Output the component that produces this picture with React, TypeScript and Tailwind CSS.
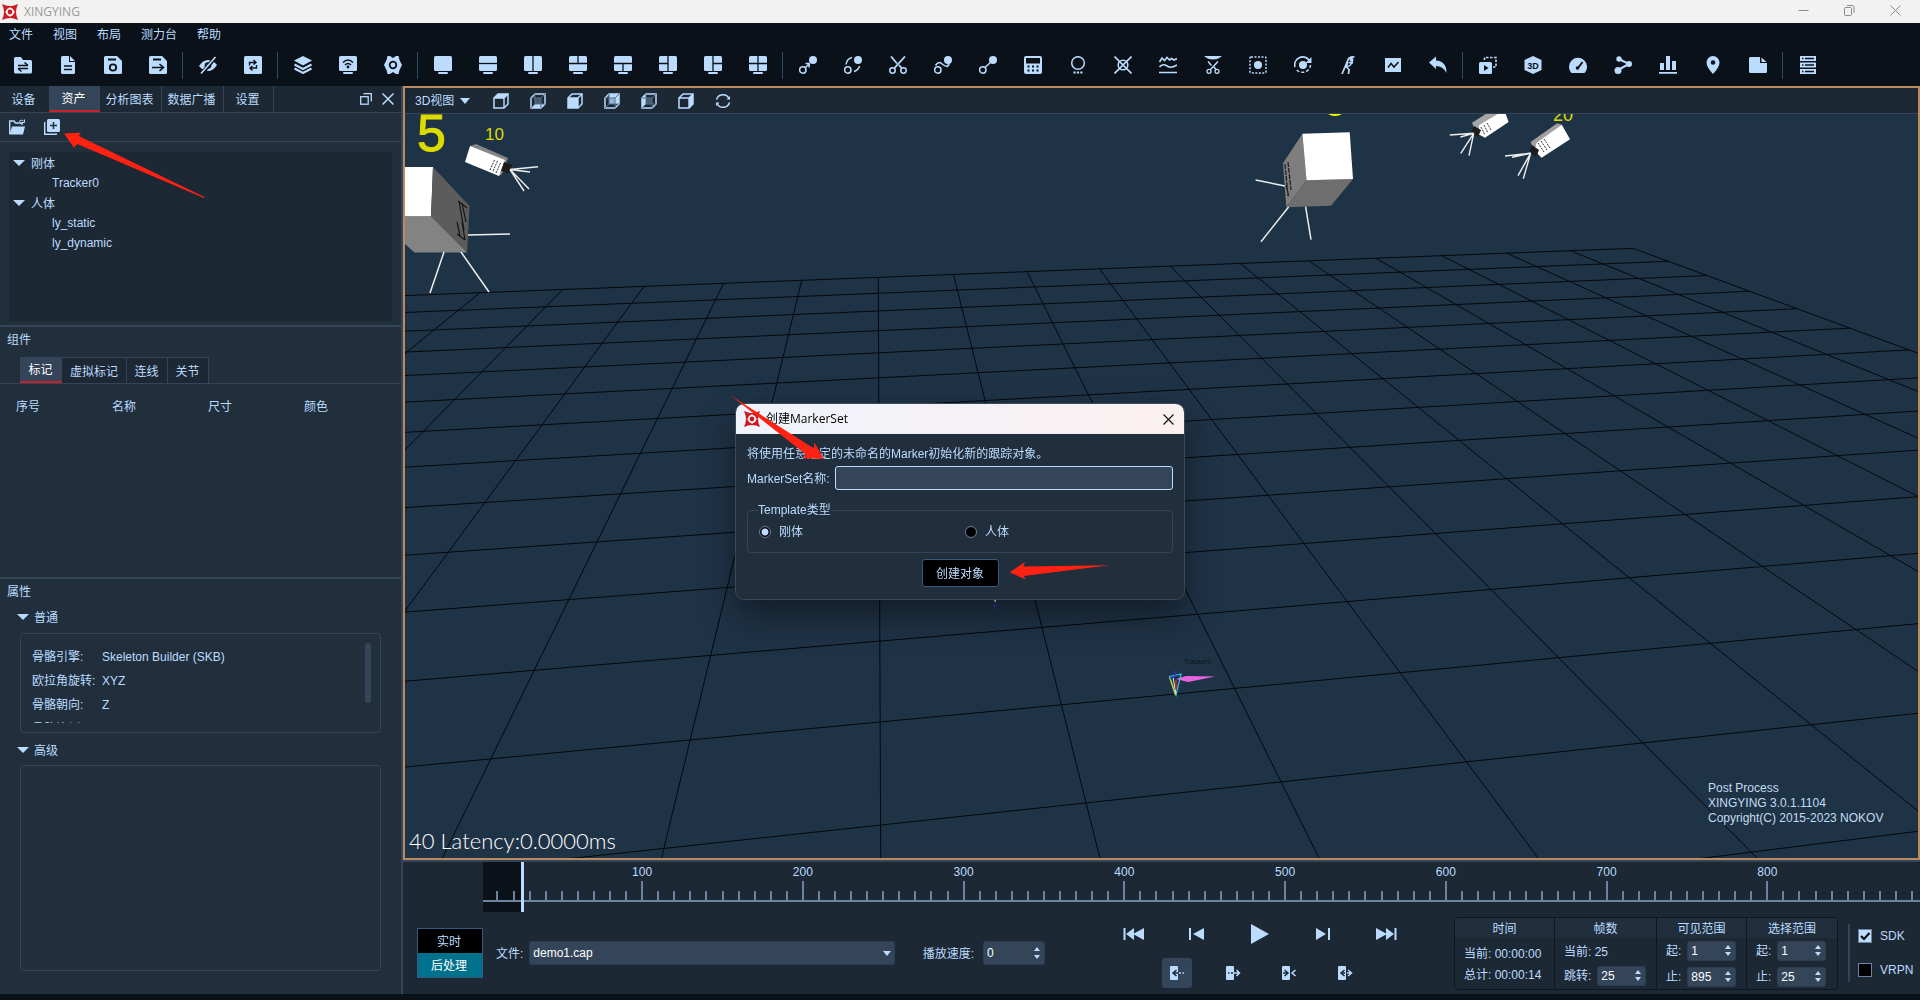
import { useState } from "react";
import type { ReactNode } from "react";

const DARK = "#0a1118";

function Ico({ children, size = 18 }: { children: ReactNode; size?: number }) {
  return (
    <svg width={size} height={size} viewBox={`0 0 ${size} ${size}`} fill="currentColor" stroke="none" aria-hidden="true">
      {children}
    </svg>
  );
}

function Logo() {
  return (
    <svg width="16" height="16" viewBox="0 0 16 16" aria-hidden="true">
      <path d="M0 0 L4 1.5 Q8 2.5 12 1.5 L16 0 L14.5 4 Q13.5 8 14.5 12 L16 16 L12 14.5 Q8 13.5 4 14.5 L0 16 L1.5 12 Q2.5 8 1.5 4 Z" fill="#cf1820" />
      <circle cx="8" cy="8" r="3.2" fill="none" stroke="#fff" strokeWidth="1.6" />
      <path d="M8 3v2M8 11v2M3 8h2M11 8h2" stroke="#fff" strokeWidth="1" />
    </svg>
  );
}

// monitor icon, "lines" are the pane dividers
function Screen({ lines = "" }: { lines?: string }) {
  return (
    <Ico>
      <rect x="0" y="0" width="18" height="15" rx="1.5" />
      <rect x="4" y="16" width="10" height="2" rx="1" />
      <path d={lines} stroke={DARK} strokeWidth="1.3" />
    </Ico>
  );
}

const toolGroups: { label: string; icon: ReactNode }[][] = [
  [
    {
      label: "打开",
      icon: (
        <Ico>
          <path d="M0 2.5Q0 1 1.5 1H7l2 3h7.500Q18 4 18 5.500V16Q18 17.500 16.500 17.500H1.500Q0 17.500 0 16Z" />
          <path d="M4 9.500h10M10.500 6.500l3.500 3M14 12.500H4M7.500 15.500L4 12.500" fill="none" stroke={DARK} strokeWidth="1.5" />
        </Ico>
      ),
    },
    {
      label: "新建",
      icon: (
        <Ico>
          <path d="M2 1.500Q2 0 3.500 0H10v6h6v10.500Q16 18 14.500 18H3.500Q2 18 2 16.500Z" />
          <path d="M11 0L16 5H11Z" />
          <path d="M5 10h8M5 13.500h8" stroke={DARK} strokeWidth="1.500" />
        </Ico>
      ),
    },
    {
      label: "保存",
      icon: (
        <Ico>
          <path d="M0 1.500Q0 0 1.500 0H13l5 5v11.500Q18 18 16.500 18h-15Q0 18 0 16.500Z" />
          <path d="M4 3.500h8" stroke={DARK} strokeWidth="2" />
          <circle cx="9" cy="11.500" r="3.200" fill="none" stroke={DARK} strokeWidth="1.800" />
        </Ico>
      ),
    },
    {
      label: "另存为",
      icon: (
        <Ico>
          <path d="M0 1.500Q0 0 1.500 0H13l5 5v11.500Q18 18 16.500 18h-15Q0 18 0 16.500Z" />
          <path d="M4 3.500h8" stroke={DARK} strokeWidth="2" />
          <path d="M3 11.500h11M10.500 8l4 3.500l-4 3.500" fill="none" stroke={DARK} strokeWidth="1.600" />
        </Ico>
      ),
    },
  ],
  [
    {
      label: "隐藏",
      icon: (
        <Ico>
          <path d="M0 10Q4 4 9 4q5 0 9 5q-4 6-9 6t-9-5Z" />
          <circle cx="9" cy="9.500" r="3.300" fill={DARK} />
          <circle cx="9" cy="9.500" r="1.800" />
          <path d="M16.500 1L2.500 18" stroke={DARK} strokeWidth="4" />
          <path d="M16.500 1L2 17.500" stroke="currentColor" strokeWidth="1.600" />
        </Ico>
      ),
    },
    {
      label: "刷新",
      icon: (
        <Ico>
          <rect x="0" y="0" width="18" height="18" rx="1.500" />
          <path d="M5.500 9.500V6.500H12M9.500 4L12 6.500L9.500 8.500M12.500 9V12H6M8.500 14.500L6 12L8.500 10" fill="none" stroke={DARK} strokeWidth="1.400" />
        </Ico>
      ),
    },
  ],
  [
    {
      label: "图层",
      icon: (
        <Ico>
          <path d="M9 0l9 4.500L9 9.500L0 4.500Z" />
          <path d="M0.500 8.500L9 13l8.500-4.500M0.500 12.500L9 17l8.500-4.500" fill="none" stroke="currentColor" strokeWidth="2" />
        </Ico>
      ),
    },
    {
      label: "网络",
      icon: (
        <Ico>
          <rect x="0" y="0" width="18" height="15" rx="1.500" />
          <rect x="4" y="16" width="10" height="2" rx="1" />
          <path d="M4 6.500Q9 1.500 14 6.500M6 9q3-3 6 0" fill="none" stroke={DARK} strokeWidth="1.600" />
          <circle cx="9" cy="11" r="1.400" fill={DARK} />
        </Ico>
      ),
    },
    {
      label: "系统设置",
      icon: (
        <Ico>
          <path d="M3.500 0h2.500l3 2l3-2h2.500l1 4L18 9l-2.500 5l-1 4H12l-3-2l-3 2H3.500l-1-4L0 9l2.500-5Z" />
          <circle cx="9" cy="9" r="3.300" fill="none" stroke={DARK} strokeWidth="1.800" />
        </Ico>
      ),
    },
  ],
  [
    { label: "单视图", icon: <Screen /> },
    { label: "上下视图", icon: <Screen lines="M0 7.500H18" /> },
    { label: "左右视图", icon: <Screen lines="M9 0V15" /> },
    { label: "三视图上", icon: <Screen lines="M0 7.500H18M9 0V7.500" /> },
    { label: "三视图下", icon: <Screen lines="M0 7.500H18M9 7.500V15" /> },
    { label: "三视图左", icon: <Screen lines="M9 0V15M0 7.500H9" /> },
    { label: "三视图右", icon: <Screen lines="M9 0V15M9 7.500H18" /> },
    { label: "四视图", icon: <Screen lines="M9 0V15M0 7.500H18" /> },
  ],
  [
    {
      label: "识别",
      icon: (
        <Ico>
          <circle cx="14" cy="4" r="4" />
          <circle cx="3.800" cy="14" r="3.200" fill="none" stroke="currentColor" strokeWidth="1.500" />
          <path d="M6.500 11.500L10 8M6.500 7.500H10.200V11.500" fill="none" stroke="currentColor" strokeWidth="1.400" />
        </Ico>
      ),
    },
    {
      label: "交换",
      icon: (
        <Ico>
          <circle cx="14" cy="4" r="4" />
          <circle cx="3.800" cy="14" r="3.200" fill="none" stroke="currentColor" strokeWidth="1.500" />
          <path d="M2 8.500Q3 2.500 8 1.500M10 15.500Q14.500 14 15.500 10" fill="none" stroke="currentColor" strokeWidth="1.500" />
        </Ico>
      ),
    },
    {
      label: "剪切",
      icon: (
        <Ico>
          <path d="M2 0.500L8 7.500M16 0.500L5.500 12M10 9L12.500 12" stroke="currentColor" strokeWidth="1.800" />
          <circle cx="3.500" cy="14.500" r="2.700" fill="none" stroke="currentColor" strokeWidth="1.500" />
          <circle cx="14.500" cy="14.500" r="2.700" fill="none" stroke="currentColor" strokeWidth="1.500" />
        </Ico>
      ),
    },
    {
      label: "插值",
      icon: (
        <Ico>
          <circle cx="14" cy="4" r="4" />
          <circle cx="3.800" cy="14" r="3.200" fill="none" stroke="currentColor" strokeWidth="1.500" />
          <path d="M1.500 9.500Q4.500 5 7.500 7.500T13 10.500Q15.500 9 15 6" fill="none" stroke="currentColor" strokeWidth="1.500" />
        </Ico>
      ),
    },
    {
      label: "连接",
      icon: (
        <Ico>
          <circle cx="14" cy="4" r="4" />
          <circle cx="3.800" cy="14" r="3.200" fill="none" stroke="currentColor" strokeWidth="1.500" />
          <path d="M6 11.500L13 5" stroke="currentColor" strokeWidth="1.500" />
        </Ico>
      ),
    },
    {
      label: "计算",
      icon: (
        <Ico>
          <rect x="0" y="0" width="18" height="18" rx="2" />
          <path d="M2 2h14v5.500H2ZM3.500 9.500h2v2h-2ZM8 9.500h2v2H8ZM12.500 9.500h2v2h-2ZM3.500 13.500h2v2h-2ZM8 13.500h2v2H8ZM12.500 13.500h2v2h-2Z" fill={DARK} />
        </Ico>
      ),
    },
    {
      label: "骨骼",
      icon: (
        <Ico>
          <circle cx="9" cy="7" r="6.300" fill="none" stroke="currentColor" strokeWidth="1.500" />
          <path d="M4.500 16.500h2.200M7.900 16.500h2.200M11.300 16.500h2.200" stroke="currentColor" strokeWidth="2" />
        </Ico>
      ),
    },
    {
      label: "删除",
      icon: (
        <Ico>
          <path d="M0.500 0.500L17.500 17.500M17.500 0.500L0.500 17.500" stroke="currentColor" strokeWidth="1.600" />
          <circle cx="9" cy="9" r="4.800" fill="none" stroke="currentColor" strokeWidth="1.600" />
        </Ico>
      ),
    },
    {
      label: "平滑",
      icon: (
        <Ico>
          <path d="M0.500 6L3 2L5.500 4.500L8 1.500L10.500 4L12.500 2.500L15 4L18 2.500M0.500 11Q4 7 8 10t10-1M0 16.500H18" fill="none" stroke="currentColor" strokeWidth="1.600" />
        </Ico>
      ),
    },
    {
      label: "裁剪",
      icon: (
        <Ico>
          <path d="M0 0h18Q14 3.500 9 3.500T0 0Z" />
          <path d="M4 5.500l3.500 4M14 5.500l-7.500 8M10 11l2 2.500" stroke="currentColor" strokeWidth="1.500" />
          <circle cx="5" cy="15.300" r="2" fill="none" stroke="currentColor" strokeWidth="1.300" />
          <circle cx="13" cy="15.300" r="2" fill="none" stroke="currentColor" strokeWidth="1.300" />
        </Ico>
      ),
    },
    {
      label: "框选",
      icon: (
        <Ico>
          <rect x="1" y="1" width="16" height="16" rx="1" fill="none" stroke="currentColor" strokeWidth="1.500" strokeDasharray="2 1.500" />
          <circle cx="9" cy="9" r="4" />
        </Ico>
      ),
    },
    {
      label: "旋转",
      icon: (
        <Ico>
          <path d="M1 11A8 8 0 0 1 15 4" fill="none" stroke="currentColor" strokeWidth="1.700" />
          <path d="M17.500 1V7H11.500Z" />
          <path d="M16.500 9A8 8 0 0 1 2 13" fill="none" stroke="currentColor" strokeWidth="1.500" strokeDasharray="3 2" />
          <circle cx="9" cy="9" r="4" />
        </Ico>
      ),
    },
    {
      label: "人体",
      icon: (
        <Ico>
          <path d="M15.500 1Q9.500 0.500 8.500 5L6 11L3 18M8.500 6L7.500 11L10 13.500L9.500 18" fill="none" stroke="currentColor" strokeWidth="1.700" />
          <path d="M9.500 6.500L14 7M13.500 5L11.500 9L8 11" fill="none" stroke="currentColor" strokeWidth="1.400" />
          <circle cx="12.500" cy="3.800" r="2" />
        </Ico>
      ),
    },
    {
      label: "曲线",
      icon: (
        <Ico>
          <rect x="1" y="2" width="16" height="14" />
          <path d="M4 11.500l3-4l3 3.500l4.500-5" fill="none" stroke={DARK} strokeWidth="1.500" />
        </Ico>
      ),
    },
    {
      label: "撤销",
      icon: (
        <Ico>
          <path d="M0 6.500L7 0.500V4.500Q17.500 5 17.500 17Q14 10 7 10v3Z" />
        </Ico>
      ),
    },
  ],
  [
    {
      label: "录制",
      icon: (
        <Ico>
          <path d="M5.500 4V1.500h11.500V11H14" fill="none" stroke="currentColor" strokeWidth="1.600" strokeDasharray="2.500 1.500" />
          <rect x="0" y="6" width="13" height="12" rx="1.500" />
          <path d="M5 9l4.500 3L5 15Z" fill={DARK} />
        </Ico>
      ),
    },
    {
      label: "三维",
      icon: (
        <Ico>
          <path d="M9 0l8.500 4v10L9 18L0.500 14V4Z" />
          <text x="9" y="12.500" textAnchor="middle" fontSize="9" fontWeight="700" fill={DARK}>3D</text>
        </Ico>
      ),
    },
    {
      label: "仪表",
      icon: (
        <Ico>
          <path d="M2 16.500A9 9 0 1 1 16 16.500Q15.500 17 14.500 17h-11Q2.500 17 2 16.500Z" />
          <path d="M9 12L13.500 6" stroke={DARK} strokeWidth="2" />
          <circle cx="8.500" cy="12" r="1.800" fill={DARK} />
        </Ico>
      ),
    },
    {
      label: "分享",
      icon: (
        <Ico>
          <circle cx="5" cy="3" r="2.700" />
          <circle cx="15" cy="8" r="3" />
          <circle cx="4" cy="14.500" r="3.500" />
          <path d="M5 3L15 8L4 14" fill="none" stroke="currentColor" strokeWidth="2" />
        </Ico>
      ),
    },
    {
      label: "统计",
      icon: (
        <Ico>
          <path d="M1 7h4v7H1ZM7 0h4v14H7ZM13 5h4v9h-4ZM0 16h18v1.800H0Z" />
        </Ico>
      ),
    },
    {
      label: "定位",
      icon: (
        <Ico>
          <path d="M9 0a6.500 6.500 0 0 1 6.500 6.500Q15.500 11 9 18Q2.500 11 2.500 6.500A6.500 6.500 0 0 1 9 0Z" />
          <circle cx="9" cy="6.500" r="2.300" fill={DARK} />
        </Ico>
      ),
    },
    {
      label: "便签",
      icon: (
        <Ico>
          <path d="M0 2.500Q0 1 1.500 1H11v6h7v8.500Q18 17 16.500 17h-15Q0 17 0 15.500Z" />
          <path d="M12.500 1.500L17.500 6h-5Z" />
        </Ico>
      ),
    },
  ],
  [
    {
      label: "列表",
      icon: (
        <Ico>
          <path d="M1 0h16v5H1ZM1 6.500h16v5H1ZM1 13h16v5H1Z" />
          <path d="M6 2.500h9M6 9h9M6 15.500h9" stroke={DARK} strokeWidth="1.500" />
          <path d="M3 2.500h1.500M3 9h1.500M3 15.500h1.500" stroke={DARK} strokeWidth="1.500" />
        </Ico>
      ),
    },
  ],
];

const cubeFaces = [
  { label: "顶视图", face: "M1 5L5 1H15L11 5Z" },
  { label: "底视图", face: "M1 15L5 11H15L11 15Z" },
  { label: "前视图", face: "M1 5H11V15H1Z" },
  { label: "后视图", face: "M5 1H15V11H5Z" },
  { label: "左视图", face: "M1 5L5 1V11L1 15Z" },
  { label: "右视图", face: "M11 5L15 1V11L11 15Z" },
];

function Cube({ face, back }: { face: string; back: boolean }) {
  return (
    <Ico size={16}>
      <path d={face} />
      {back && <path d="M5 5H11V11H5Z" fill="#6f8cab" opacity="0.5" />}
      <path d="M1 5L5 1H15V11L11 15H1Z" fill="none" stroke="currentColor" strokeWidth="1.5" />
      {back ? (
        <path d="M5 1V11M5 11H15M5 11L1 15M1 5H11V15M11 5L15 1" fill="none" stroke="#56708c" strokeWidth="1" />
      ) : (
        <path d="M1 5H11V15M11 5L15 1" fill="none" stroke="currentColor" strokeWidth="1.4" />
      )}
    </Ico>
  );
}

function Caret() {
  return (
    <svg width="12" height="6" viewBox="0 0 12 6" fill="currentColor" aria-hidden="true">
      <path d="M0 0H12L6 6Z" />
    </svg>
  );
}

// ground plane: (u, v) grid index to screen
function project(u: number, v: number) {
  const d = 1 - 0.008676 * u - 0.04457 * v;
  const x = (1633 - 76.23 * u - 39.088 * v) / d;
  const y = (248.3 + 0.2355 * u + 1.337 * v) / d;
  return [x, y];
}

function gridPath() {
  let d = "";
  for (let u = 0; u <= 17; u++) {
    const [x1, y1] = project(u, 0);
    const [x2, y2] = project(u, 15);
    d += `M${x1} ${y1}L${x2} ${y2}`;
  }
  for (let v = 0; v <= 14; v++) {
    const [x1, y1] = project(0, v);
    const [x2, y2] = project(17, v);
    d += `M${x1} ${y1}L${x2} ${y2}`;
  }
  return d;
}

function Scene() {
  return (
    <svg className="absolute inset-0 h-full w-full" viewBox="405 114 1513 744" preserveAspectRatio="xMinYMin slice" aria-hidden="true">
      <path d={gridPath()} fill="none" stroke="#04080c" strokeWidth="1" />

      {/* camera 5 */}
      <text x="417" y="151" fontSize="52" fill="#dcdc00" stroke="#dcdc00" fontFamily="Liberation Sans">5</text>
      <path d="M405 167H433L431 216.500H405Z" fill="#fff" />
      <path d="M433 167L469.500 206L467 252.500L431 217Z" fill="#5c5c5c" />
      <path d="M405 216.500H431L467 252.500H414.500L405 244Z" fill="#838383" />
      <path d="M458 201L467 208M459 201L464 230M462 203L466 222M457 222L460 236M462 222L465 240M457 234L465 240" fill="none" stroke="#151515" strokeWidth="1.200" />
      <path d="M468 235L510 234M444 252L430 293M461 252L489 292" stroke="#eee" strokeWidth="1.500" />

      {/* camera 10 */}
      <text x="485" y="140" fontSize="17" fill="#dcdc00" fontFamily="Liberation Sans">10</text>
      <path d="M470 146L476 144L508 158L502 174L499 176Z" fill="#858585" />
      <path d="M470 146L505 160L499 176L465 162Z" fill="#fff" />
      <path d="M490 170l5-11M493 171l5-11M496 173l5-11" stroke="#333" strokeDasharray="2 1" />
      <path d="M504 162L512 165L509 173L501 171Z" fill="#1c1c1c" />
      <path d="M510 169.500L538 166.700M510 169.500L530 172M510 169.500L529 189M510 169.500L524 191" stroke="#eee" strokeWidth="1.400" />

      {/* far camera on the right */}
      <ellipse cx="1335" cy="113" rx="7" ry="3" fill="#f5f500" />
      <path d="M1302.400 133.700L1306.500 180.300L1286.300 207.300L1283 163.300Z" fill="#7e7e7e" />
      <path d="M1306.500 180.300L1353 179L1331 205.700L1286.300 207.300Z" fill="#6e6e6e" />
      <path d="M1302.400 133.700L1349.700 132.300L1353 179L1306.500 180.300Z" fill="#fff" />
      <path d="M1285 164L1288 196M1288 162L1291 190M1286 185L1289 197" stroke="#1c1c1c" strokeWidth="1.200" strokeDasharray="5 1" />
      <path d="M1285 186L1255.600 180M1288.600 207L1261 241.700M1305.600 206.700L1311 239.700" stroke="#eee" strokeWidth="1.500" />

      <path d="M1472 122.700L1489 112H1502L1479 127L1476 132Z" fill="#a5a5a5" />
      <path d="M1479 125.300L1501 112H1505L1508.600 122L1485 137.700L1478 134Z" fill="#fff" />
      <path d="M1481 127l4 8M1484 125l4 8M1487 123l4 7" stroke="#333" strokeDasharray="2 1" />
      <path d="M1474 126L1481 130L1478 137L1471 133Z" fill="#1c1c1c" />
      <path d="M1473.700 133.300L1449.800 135M1473.700 133.300L1460.400 137M1473.700 133.300L1460.800 153.300M1473.700 133.300L1469 155.700" stroke="#eee" strokeWidth="1.400" />

      {/* camera 20 */}
      <text x="1553" y="121" fontSize="18" fill="#dcdc00" fontFamily="Liberation Sans">20</text>
      <path d="M1530.600 142L1557.200 123.300L1562 124.700L1537 144L1533 148Z" fill="#a39f9f" />
      <path d="M1536.600 142.700L1561.800 124.700L1570 139.300L1541.600 157.700L1534 150Z" fill="#fff" />
      <path d="M1538 143l6 9M1541 141l6 9M1544 139l6 9" stroke="#333" strokeDasharray="2 1" />
      <path d="M1532 145L1539 150L1536 157L1529 152Z" fill="#1c1c1c" />
      <path d="M1530.600 153.300L1505 156M1530.600 153.300L1512 157.300M1530.600 153.300L1518 175.700M1530.600 153.300L1523.300 178.700" stroke="#eee" strokeWidth="1.400" />

      {/* tracked objects */}
      <path d="M995 596V602" stroke="#dfe6cf" strokeWidth="2" />
      <path d="M990 605.500H999M994.500 601V609M1067 597V600" stroke="#34349c" strokeWidth="1.200" />
      <text x="1184" y="664" fontSize="7" fill="#0b141c" fontFamily="Liberation Sans">Tracker0</text>
      <path d="M1176 679L1186 676L1215 676.500L1188 682Z" fill="#ea63e0" />
      <path d="M1169.500 676.500L1181 674L1176 695Z" fill="none" stroke="#35c3e8" strokeWidth="1.200" />
      <path d="M1169.500 677L1175.500 695" stroke="#b7cf3a" strokeWidth="1.300" />
      <path d="M1173 677L1176 694" stroke="#e6e6e6" />
      <path d="M1176 680V689" stroke="#e02020" strokeWidth="1.500" />
      <path d="M1175 671V677L1170 678" fill="none" stroke="#2c34d8" strokeWidth="1.300" />
    </svg>
  );
}

function Spin({ label, value, cls }: { label: string; value: number; cls: string }) {
  const [n, setN] = useState(value);
  return (
    <div className={`flex items-center rounded-[3px] border border-[#2c3d4f] bg-[#34455a] pl-[3px] pr-1 ${cls}`}>
      <input
        type="number"
        aria-label={label}
        value={n}
        onChange={(e) => setN(Number(e.target.value))}
        className="w-0 min-w-0 flex-1 appearance-none bg-transparent text-[12px] leading-4 text-white outline-none [appearance:textfield] [&::-webkit-inner-spin-button]:appearance-none"
      />
      <div className="flex h-full flex-col justify-evenly">
        <button aria-label={label + "加"} onClick={() => setN(n + 1)}>
          <svg width="6" height="4" viewBox="0 0 6 4" className="block" fill="currentColor"><path d="M3 0L6 4H0Z" /></svg>
        </button>
        <button aria-label={label + "减"} onClick={() => setN(n - 1)}>
          <svg width="6" height="4" viewBox="0 0 6 4" className="block" fill="currentColor"><path d="M0 0H6L3 4Z" /></svg>
        </button>
      </div>
    </div>
  );
}

function TitleBar() {
  return (
    <header className="flex h-[23px] items-center bg-[#f2f2f2] pl-[2px] text-[#999]">
      <Logo />
      <h1 className="ml-[6px] flex-1 font-['Open_Sans'] text-[12px]">XINGYING</h1>
      <div className="flex h-full items-center gap-[35px] pb-[3px] pr-[19px]">
        <button aria-label="最小化">
          <svg width="11" height="11" viewBox="0 0 11 11" fill="none" stroke="#8a8a8a"><path d="M0.500 5.500H10.500" /></svg>
        </button>
        <button aria-label="还原">
          <svg width="11" height="11" viewBox="0 0 11 11" fill="none" stroke="#8a8a8a">
            <rect x="0.500" y="2.500" width="7" height="8" rx="1" />
            <path d="M3 0.500H8.500Q10 0.500 10 2V8" />
          </svg>
        </button>
        <button aria-label="关闭">
          <svg width="11" height="11" viewBox="0 0 11 11" fill="none" stroke="#8a8a8a"><path d="M0.500 0.500L10.500 10.500M10.500 0.500L0.500 10.500" /></svg>
        </button>
      </div>
    </header>
  );
}

function Toolbar() {
  return (
    <div className="flex h-[42px] items-center">
      {toolGroups.map((group, i) => (
        <div key={i} className="flex items-center">
          {i > 0 && (
            <div className="flex w-[5px] justify-center">
              <div className="h-[27px] w-px bg-[#2d4a66]" />
            </div>
          )}
          {group.map((t) => (
            <button key={t.label} aria-label={t.label} className="flex h-8 w-[45px] items-center justify-center">
              {t.icon}
            </button>
          ))}
        </div>
      ))}
    </div>
  );
}

function LeftPanel() {
  return (
    <aside className="flex w-[403px] shrink-0 flex-col border-r-2 border-[#34455a] bg-[#212f3d]">
      <div className="flex h-[27px] items-stretch border-b border-[#34455a] bg-[#1c2834]">
        <button className="w-[49px] pr-[2px] pt-[2px]">设备</button>
        <button className="w-[51px] border-b-2 border-[#c8232b] bg-[#34455a] pr-[2px] pt-[2px] text-white">资产</button>
        <button className="w-[62px] border-r border-[#34455a] pr-[2px] pt-[2px]">分析图表</button>
        <button className="w-[62px] border-r border-[#34455a] pr-[2px] pt-[2px]">数据广播</button>
        <button className="w-[50px] border-r border-[#34455a] pr-[2px] pt-[2px]">设置</button>
        <div className="flex flex-1 items-center justify-end gap-[10px] pr-[7px]">
          <button aria-label="浮动">
            <svg width="12" height="12" viewBox="0 0 12 12" fill="none" stroke="currentColor" strokeWidth="1.300">
              <rect x="0.700" y="3.700" width="7.500" height="7.500" />
              <path d="M3.500 0.700H11.300V8.500" />
            </svg>
          </button>
          <button aria-label="关闭面板">
            <svg width="12" height="12" viewBox="0 0 12 12" fill="none" stroke="currentColor" strokeWidth="1.500"><path d="M0.500 0.500L11.500 11.500M11.500 0.500L0.500 11.500" /></svg>
          </button>
        </div>
      </div>

      <div className="flex h-[29px] items-center gap-[19px] border-b border-[#34455a] pl-[9px]">
        <button aria-label="打开资产">
          <Ico size={16}>
            <path d="M0.700 15V2H5l1.500 2H13v2" fill="none" stroke="currentColor" strokeWidth="1.400" />
            <path d="M3 7.500H16L14 15.500H0.500Z" />
            <path d="M10 2.500Q12.500 0 14.500 2M15.500 0.500V3.500H12.500" fill="none" stroke="currentColor" />
          </Ico>
        </button>
        <button aria-label="新建资产">
          <Ico size={16}>
            <rect x="3" y="0" width="13" height="13" rx="1.500" />
            <path d="M9.500 3V10M6 6.500H13" stroke="#212f3d" strokeWidth="1.500" />
            <path d="M0.700 3V15.300H13" fill="none" stroke="currentColor" strokeWidth="1.400" />
          </Ico>
        </button>
      </div>

      <ul className="mx-[9px] mt-[10px] h-[169px] bg-[#1c2834] pt-[1px] leading-5">
        <li className="flex h-5 items-center gap-[6px] pl-1"><Caret /><span className="pt-[2px]">刚体</span></li>
        <li className="pl-[43px]">Tracker0</li>
        <li className="flex h-5 items-center gap-[6px] pl-1"><Caret /><span className="pt-[2px]">人体</span></li>
        <li className="pl-[43px]">ly_static</li>
        <li className="pl-[43px]">ly_dynamic</li>
      </ul>

      <section className="mt-1 h-[252px] border-t-2 border-[#34455a]">
        <h2 className="h-[30px] pl-[7px] pt-[5px] leading-4">组件</h2>
        <div className="flex h-[27px] border-b border-[#34455a] pl-5">
          <button className="w-[42px] border-b-2 border-[#c8232b] bg-[#34455a] pr-[1px] pt-[2px] text-white">标记</button>
          <button className="w-[65px] border-r border-t border-[#34455a] bg-[#1c2834] pt-[2px]">虚拟标记</button>
          <button className="w-[41px] border-r border-t border-[#34455a] bg-[#1c2834] pr-[1px] pt-[2px]">连线</button>
          <button className="w-[41px] border-r border-t border-[#34455a] bg-[#1c2834] pr-[1px] pt-[2px]">关节</button>
        </div>
        <table className="mt-3 text-left leading-5">
          <thead>
            <tr>
              <th className="w-24 pl-4 pt-[1px] font-normal">序号</th>
              <th className="w-24 pl-4 pt-[1px] font-normal">名称</th>
              <th className="w-24 pl-4 pt-[1px] font-normal">尺寸</th>
              <th className="w-24 pl-4 pt-[1px] font-normal">颜色</th>
            </tr>
          </thead>
        </table>
      </section>

      <section className="flex flex-1 flex-col border-t-2 border-[#34455a]">
        <h2 className="pl-[7px] pt-[5px] leading-4">属性</h2>
        <button className="mt-[7px] flex h-5 items-center gap-[5px] pl-[17px]"><Caret /><span className="pt-[2px]">普通</span></button>
        <div className="ml-5 mr-5 mt-[6px] flex h-[100px] justify-between rounded-[4px] border border-[#34455a] py-[9px] pl-[11px] pr-[9px]">
          <dl className="grid auto-rows-[24px] grid-cols-[70px_auto] overflow-hidden pt-[2px] leading-6">
            <dt>骨骼引擎:</dt>
            <dd>Skeleton Builder (SKB)</dd>
            <dt className="whitespace-nowrap">欧拉角旋转:</dt>
            <dd>XYZ</dd>
            <dt>骨骼朝向:</dt>
            <dd>Z</dd>
            <dt>骨骼比例:</dt>
            <dd />
          </dl>
          <div className="h-[60px] w-[6px] rounded-full bg-[#34455a]" />
        </div>
        <button className="mt-[7px] flex h-5 items-center gap-[5px] pl-[17px]"><Caret /><span className="pt-[2px]">高级</span></button>
        <div className="mx-5 mb-[23px] mt-[5px] flex-1 rounded-[4px] border border-[#34455a]" />
      </section>
    </aside>
  );
}

function Viewport() {
  return (
    <section className="flex flex-1 flex-col border-2 border-[#b98b5e]">
      <div className="flex h-[26px] shrink-0 items-center border-b border-[#34455a] bg-[#1c2834] pl-[10px]">
        <button className="flex w-[78px] items-center gap-[6px] pt-[1px]">
          3D视图
          <svg width="10" height="6" viewBox="0 0 10 6" fill="currentColor"><path d="M0 0H10L5 6Z" /></svg>
        </button>
        <div className="flex gap-[21px]">
          {cubeFaces.map((c, i) => (
            <button key={c.label} aria-label={c.label}><Cube face={c.face} back={i === 1 || i === 3 || i === 4} /></button>
          ))}
          <button aria-label="重置视图">
            <Ico size={16}>
              <path d="M1.500 6.500A6.700 6.700 0 0 1 14 5.500M14.500 9.500A6.700 6.700 0 0 1 2 10.500" fill="none" stroke="currentColor" strokeWidth="1.500" />
              <path d="M15 3V6.500H11.500ZM1 13V9.500H4.500Z" />
            </Ico>
          </button>
        </div>
      </div>
      <div className="relative flex-1 overflow-hidden bg-[#1f3347]">
        <Scene />
        <p className="absolute bottom-[3px] left-1 font-['Lato'] text-[22px] font-light leading-7 text-white">40 Latency:0.0000ms</p>
        <p className="absolute bottom-8 right-[33px] w-[177px] whitespace-nowrap leading-[15px] text-[#c3dcf2]">
          Post Process<br />XINGYING 3.0.1.1104<br />Copyright(C) 2015-2023 NOKOV
        </p>
      </div>
    </section>
  );
}

const ticks = Array.from({ length: 89 }, (_, i) => (i + 1) * 10);

function Timeline() {
  return (
    <div className="relative ml-20 h-[50px] overflow-hidden">
      <div className="absolute inset-y-0 left-0 w-[39px] bg-[#0a1118]" />
      <div className="absolute left-0 right-0 top-[38px] h-[2px] bg-[#6b839f]" />
      {ticks.map((f) => (
        <div key={f} className="absolute bottom-[11px]" style={{ left: `${((f - 1) / 894) * 100}%` }}>
          {f % 100 === 0 && <span className="absolute bottom-[21px] left-0 -translate-x-1/2 leading-4">{f}</span>}
          <div className={f % 100 === 0 ? "h-5 w-[2px] -translate-x-1/2 bg-[#6b839f]" : "h-[10px] w-[2px] -translate-x-1/2 bg-[#6b839f]"} />
        </div>
      ))}
      <div className="absolute inset-y-0 left-[38px] w-[3px] bg-[#bcdcff]" />
    </div>
  );
}

const transport = [
  { label: "第一帧", d: "M5.500 7h2v12h-2ZM16 7v12L8 13ZM26 7v12L15 13Z" },
  { label: "上一帧", d: "M8 7h2v12H8ZM23 7v12L12 13Z" },
  { label: "播放", d: "M7 3L25 13L7 23Z" },
  { label: "下一帧", d: "M9 7v12L19 13ZM21 7h2v12h-2Z" },
  { label: "最后一帧", d: "M6 7v12L17 13ZM16 7v12L24 13ZM24.500 7h2v12h-2Z" },
];

const rangeIcons = [
  { label: "向前", cut: "M7.500 5L4 8L7.500 11M4 8H9", out: "M10 8H12M13.500 8H15" },
  { label: "向后", cut: "M3 8H4.500M6 8H8", out: "M9 8H14M11.500 5L14.500 8L11.500 11" },
  { label: "收缩", cut: "M3.500 5L7 8L3.500 11M6 8H2", out: "M14.500 5L11 8L14.500 11" },
  { label: "扩展", cut: "M7.500 5L4 8L7.500 11M4 8H8", out: "M11 5L14.500 8L11 11M10 8H14" },
];

function Controls() {
  return (
    <div className="flex flex-1 items-center">
      <div className="ml-[14px] flex w-[66px] flex-col border border-[#345a80]">
        <button className="h-6 bg-black pr-[2px] pt-[2px]">实时</button>
        <button className="h-6 bg-[#00718c] pr-[2px] pt-[2px] text-white">后处理</button>
      </div>

      <label htmlFor="cap-file" className="ml-[13px] mr-[6px] whitespace-nowrap pt-[2px]">文件:</label>
      <div className="relative min-w-24 flex-1">
        <select id="cap-file" className="h-6 w-full appearance-none rounded-[3px] border border-[#2c3d4f] bg-[#34455a] pl-[3px] text-[12px] text-white">
          <option>demo1.cap</option>
        </select>
        <svg className="pointer-events-none absolute right-1 top-[10px]" width="8" height="5" viewBox="0 0 8 5" fill="currentColor"><path d="M0 0H8L4 5Z" /></svg>
      </div>

      <span className="ml-7 mr-[9px] whitespace-nowrap pt-[2px]">播放速度:</span>
      <Spin label="播放速度" value={0} cls="h-6 w-[62px]" />

      <div className="ml-[73px] flex flex-col gap-2">
        <div className="flex gap-[31px]">
          {transport.map((t) => (
            <button key={t.label} aria-label={t.label} className="flex h-8 w-8 items-center justify-center">
              <svg width="32" height="26" viewBox="0 0 32 26" fill="currentColor"><path d={t.d} /></svg>
            </button>
          ))}
        </div>
        <div className="ml-11 flex gap-[26px]">
          {rangeIcons.map((t, i) => (
            <button
              key={t.label}
              aria-label={t.label}
              className={i === 0 ? "flex h-[30px] w-[30px] items-center justify-center rounded-[3px] bg-[#34455a]" : "flex h-[30px] w-[30px] items-center justify-center"}
            >
              <Ico size={16}>
                <rect x="1" y="1" width="8" height="14" rx="1" />
                <path d={t.cut} fill="none" stroke="#1c2834" strokeWidth="1.500" />
                <path d={t.out} fill="none" stroke="currentColor" strokeWidth="1.500" />
              </Ico>
            </button>
          ))}
        </div>
      </div>

      <div className="ml-[52px] grid h-[73px] shrink-0 grid-cols-[100px_102px_90px_90px] overflow-hidden rounded-[4px] border border-[#0e1720]">
        <div className="border-r border-[#0e1720]">
          <h3 className="h-5 bg-[#212f3d] pt-[1px] text-center leading-5">时间</h3>
          <p className="pl-[9px] pt-[6px] leading-5">当前: 00:00:00</p>
          <p className="pl-[9px] pt-[1px] leading-5">总计: 00:00:14</p>
        </div>
        <div className="border-r border-[#0e1720]">
          <h3 className="h-5 bg-[#212f3d] pt-[1px] text-center leading-5">帧数</h3>
          <p className="pl-[9px] pt-1 leading-5">当前: 25</p>
          <div className="flex items-center gap-[6px] pl-[9px] pt-1">
            <span>跳转:</span>
            <Spin label="跳转" value={25} cls="h-5 w-[49px]" />
          </div>
        </div>
        <div className="border-r border-[#0e1720]">
          <h3 className="h-5 bg-[#212f3d] pt-[1px] text-center leading-5">可见范围</h3>
          <div className="flex items-center gap-[6px] pl-[9px] pt-[3px]">
            <span>起:</span>
            <Spin label="可见起" value={1} cls="h-5 w-[49px]" />
          </div>
          <div className="flex items-center gap-[6px] pl-[9px] pt-[6px]">
            <span>止:</span>
            <Spin label="可见止" value={895} cls="h-5 w-[49px]" />
          </div>
        </div>
        <div>
          <h3 className="h-5 bg-[#212f3d] pt-[1px] text-center leading-5">选择范围</h3>
          <div className="flex items-center gap-[6px] pl-[9px] pt-[3px]">
            <span>起:</span>
            <Spin label="选择起" value={1} cls="h-5 w-[49px]" />
          </div>
          <div className="flex items-center gap-[6px] pl-[9px] pt-[6px]">
            <span>止:</span>
            <Spin label="选择止" value={25} cls="h-5 w-[49px]" />
          </div>
        </div>
      </div>

      <div className="ml-[10px] flex h-[58px] w-[72px] shrink-0 flex-col justify-center gap-[18px] border-l-2 border-[#34455a] pl-2">
        <label className="flex items-center gap-2 leading-4">
          <span className="relative flex">
            <input type="checkbox" defaultChecked className="peer h-[14px] w-[14px] appearance-none border border-[#6b839f] bg-black checked:bg-[#bcdcff]" />
            <svg className="pointer-events-none absolute inset-0 hidden peer-checked:block" width="14" height="14" viewBox="0 0 14 14" fill="none" stroke="#000" strokeWidth="2"><path d="M3 7L6 10L11.500 4" /></svg>
          </span>
          SDK
        </label>
        <label className="flex items-center gap-2 leading-4">
          <input type="checkbox" className="h-[14px] w-[14px] appearance-none border border-[#6b839f] bg-black checked:bg-[#bcdcff]" />
          VRPN
        </label>
      </div>
    </div>
  );
}

function CreateDialog() {
  return (
    <div className="pointer-events-none fixed inset-0 flex items-center justify-center pt-[3px]">
      <form
        role="dialog"
        aria-labelledby="create-title"
        onSubmit={(e) => e.preventDefault()}
        className="pointer-events-auto h-[195px] w-[448px] overflow-hidden rounded-lg bg-[#212f3d] shadow-[0_16px_36px_rgba(0,0,0,0.45)] outline outline-[#3b4955]"
      >
        <div className="flex h-[30px] items-center bg-gradient-to-r from-[#eff3fb] to-[#fbf0f0] pl-2 pr-[10px] text-black">
          <Logo />
          <h2 id="create-title" className="ml-[6px] flex-1 font-['Open_Sans','Noto_Sans_CJK_SC',sans-serif]">创建MarkerSet</h2>
          <button type="button" aria-label="关闭对话框">
            <svg width="11" height="11" viewBox="0 0 11 11" fill="none" stroke="#111" strokeWidth="1.200"><path d="M0.500 0.500L10.500 10.500M10.500 0.500L0.500 10.500" /></svg>
          </button>
        </div>
        <div className="flex flex-col px-[11px] pt-[11px]">
          <p className="leading-[18px]">将使用任意选定的未命名的Marker初始化新的跟踪对象。</p>
          <div className="mt-[3px] flex items-center gap-[5px]">
            <label htmlFor="ms-name" className="whitespace-nowrap pt-[2px]">MarkerSet名称:</label>
            <input id="ms-name" type="text" className="h-6 min-w-0 flex-1 rounded-[3px] border border-[#bcdcff] bg-[#34455a] px-1 text-[12px] text-white outline-none" />
          </div>
          <fieldset className="mt-3 h-[51px] rounded-[4px] border border-[#34455a] pl-[10px]">
            <legend className="leading-4">Template类型</legend>
            <div className="flex pt-[5px] leading-4">
              <label className="flex w-[207px] items-center gap-2 pl-[1px]">
                <input type="radio" name="tpl" defaultChecked className="h-3 w-3 appearance-none rounded-full border border-[#6b839f] bg-black checked:bg-[radial-gradient(circle,#bcdcff_3px,#000_4px)]" />
                <span className="pt-[1px]">刚体</span>
              </label>
              <label className="flex items-center gap-2">
                <input type="radio" name="tpl" className="h-3 w-3 appearance-none rounded-full border border-[#6b839f] bg-black checked:bg-[radial-gradient(circle,#bcdcff_3px,#000_4px)]" />
                <span className="pt-[1px]">人体</span>
              </label>
            </div>
          </fieldset>
          <button type="submit" className="mt-[6px] h-7 w-[77px] self-center rounded-[3px] border border-[#345a80] bg-black pt-[2px]">创建对象</button>
        </div>
      </form>
    </div>
  );
}

export default function App() {
  return (
    <div className="flex min-h-screen flex-col bg-[#0a1118] font-['Liberation_Sans','Noto_Sans_CJK_SC',sans-serif] text-[12px] leading-4 text-[#bcdcff]">
      <TitleBar />
      <nav className="flex h-[21px] items-center gap-5 pl-[9px] pt-[2px]">
        <button>文件</button>
        <button>视图</button>
        <button>布局</button>
        <button>测力台</button>
        <button>帮助</button>
      </nav>
      <Toolbar />
      <main className="mb-[6px] flex flex-1">
        <LeftPanel />
        <div className="flex min-w-0 flex-1 flex-col">
          <Viewport />
          <div className="flex h-[134px] shrink-0 flex-col border-t-2 border-[#34455a] bg-[#1c2834]">
            <Timeline />
            <Controls />
          </div>
        </div>
      </main>

      <CreateDialog />

      {/* red hint arrows */}
      <svg className="pointer-events-none fixed inset-0 h-full w-full" viewBox="0 0 1920 1000" fill="#ff2112" aria-hidden="true">
        <path d="M64 133.500L81 132.700L78.700 136L205 197.300L204 198L77.300 144L74 147.700Z" />
        <path d="M730 395L814 448.500L814.300 442.300L823.700 458.700L803.300 458.300L806 454.500Z" />
        <path d="M1009.700 572.300L1025 562L1023.300 566.500L1109.300 565.300L1024 576L1025.300 579.300Z" />
      </svg>
    </div>
  );
}
